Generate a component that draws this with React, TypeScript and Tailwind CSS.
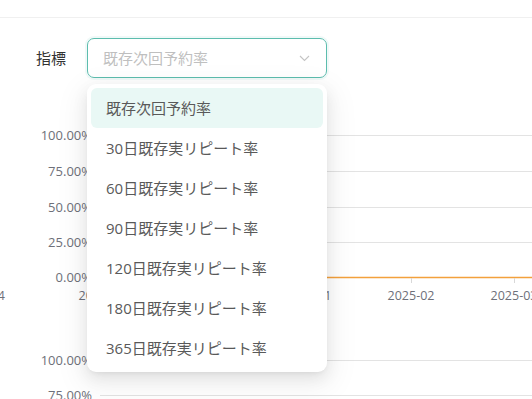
import React from "react";

const items = [
  "既存次回予約率",
  "30日既存実リピート率",
  "60日既存実リピート率",
  "90日既存実リピート率",
  "120日既存実リピート率",
  "180日既存実リピート率",
  "365日既存実リピート率",
];

const FONT = '"Open Sans", "Noto Sans CJK JP", sans-serif';

function Charts() {
  const yLabels1 = [
    ["100.00%", 135],
    ["75.00%", 171],
    ["50.00%", 207],
    ["25.00%", 242],
    ["0.00%", 277],
  ] as const;
  const xTicks = [-1, 102, 205, 308, 411, 514];
  const xLabels = ["2024-11", "2024-12", "2025-01", "2025-01", "2025-02", "2025-03"];
  return (
    <svg width={532} height={321} className="block" style={{ fontFamily: FONT }}>
      <g transform="translate(0,-78)">
        {yLabels1.map(([t, y]) => (
          <g key={t}>
            {y !== 277 && <line x1={100} x2={532} y1={y + 0.5} y2={y + 0.5} stroke="#e3e3e3" />}
            <text x={92} y={y + 4.5} textAnchor="end" fontSize={13} fill="#6e7079">
              {t}
            </text>
          </g>
        ))}
        <line x1={100} x2={532} y1={277.5} y2={277.5} stroke="#f3a13c" strokeWidth={1.5} />
        {xTicks.map((x) => (
          <line key={x} x1={x + 0.5} x2={x + 0.5} y1={278} y2={283} stroke="#d8d8d8" />
        ))}
        <text x={5} y={299.5} textAnchor="end" fontSize={12.5} fill="#6e7079">
          4
        </text>
        {xTicks.slice(1).map((x, i) => (
          <text key={x} x={x} y={299.5} textAnchor="middle" fontSize={12.5} fill="#6e7079">
            {xLabels[i + 1]}
          </text>
        ))}
        <line x1={100} x2={532} y1={360.5} y2={360.5} stroke="#e3e3e3" />
        <text x={92} y={364.5} textAnchor="end" fontSize={13} fill="#6e7079">
          100.00%
        </text>
        <line x1={100} x2={532} y1={395.5} y2={395.5} stroke="#e3e3e3" />
        <text x={92} y={399.5} textAnchor="end" fontSize={13} fill="#6e7079">
          75.00%
        </text>
      </g>
    </svg>
  );
}

export default function App() {
  return (
    <div
      className="relative w-[532px] h-[399px] overflow-hidden bg-white"
      style={{ fontFamily: FONT }}
    >
      <div className="h-[18px] border-b border-[#f0f0f0]" />
      <div className="flex items-center pt-[20px] pl-[36px]">
        <span className="text-[15px] text-[#333] w-[51px]">指標</span>
        <div className="w-[240px] h-[40px] rounded-[7px] border border-[#5dbdae] shadow-[0_0_0_2px_rgba(60,180,160,0.08)] flex items-center justify-between pl-[15px] pr-[16px]">
          <span className="text-[15px] text-[#bfbfbf]">既存次回予約率</span>
          <svg width="11" height="7" viewBox="0 0 11 7">
            <path d="M1 1l4.5 4.5L10 1" fill="none" stroke="#c4c4c4" strokeWidth="1.1" />
          </svg>
        </div>
      </div>
      <Charts />
      <div className="absolute left-[87px] top-[84px] w-[240px] rounded-[9px] bg-white p-[4px] shadow-[0_6px_16px_0_rgba(0,0,0,0.08),0_3px_6px_-4px_rgba(0,0,0,0.12),0_9px_28px_8px_rgba(0,0,0,0.05)]">
        {items.map((t, i) => (
          <div
            key={t}
            className={
              "h-[40px] flex items-center pl-[15px] rounded-[6px] text-[15px] text-[#595959] " +
              (i === 0 ? "bg-[#e9f8f5]" : "")
            }
          >
            {t}
          </div>
        ))}
      </div>
    </div>
  );
}
